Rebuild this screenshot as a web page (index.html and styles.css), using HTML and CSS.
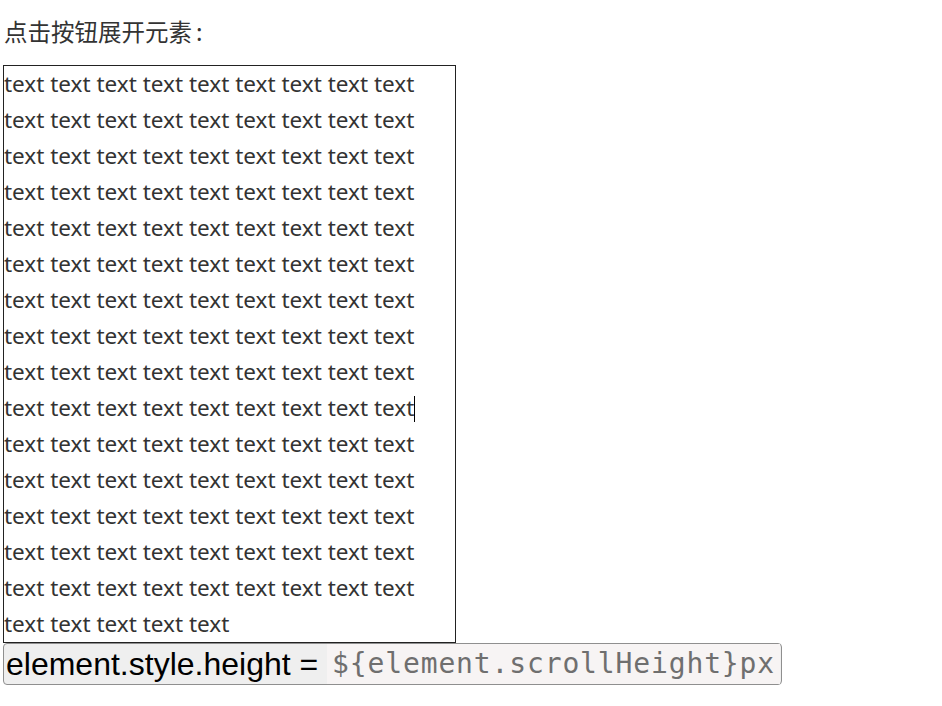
FILE: index.html
```html
<!DOCTYPE html>
<html lang="zh-CN">
<head>
<meta charset="utf-8">
<title>展开元素</title>
<link rel="stylesheet" href="styles.css">
</head>
<body>
<div class="page">
  <p class="title">点击按钮展开元素<span class="colon">:</span></p>
  <div class="panel" id="panel">
    text text text text text text text text text
    text text text text text text text text text
    text text text text text text text text text
    text text text text text text text text text
    text text text text text text text text text
    text text text text text text text text text
    text text text text text text text text text
    text text text text text text text text text
    text text text text text text text text text
    text text text text text text text text text<span class="caret"></span>
    text text text text text text text text text
    text text text text text text text text text
    text text text text text text text text text
    text text text text text text text text text
    text text text text text text text text text
    text text text text text
  </div>
  <button class="expand-btn" type="button">element.style.height = <code class="snippet">${element.scrollHeight}px</code></button>
</div>
</body>
</html>
```

FILE: styles.css
```css
html, body {
  margin: 0;
  background: #fff;
}

.page {
  padding: 13px 0 0 3px;
}

.title {
  margin: 0 0 16px 1px;
  font-family: "Noto Sans CJK SC", "Noto Sans", sans-serif;
  font-size: 23.5px;
  line-height: 36px;
  color: #333;
}

.title .colon {
  margin-left: 4px;
}

.panel {
  width: 451px;
  border: 1px solid #222;
  font-family: "Noto Sans", "Open Sans", sans-serif;
  font-size: 22.5px;
  line-height: 36px;
  color: #333;
}

/* text cursor sitting at the end of a line */
.caret {
  display: inline-block;
  width: 1px;
  height: 26px;
  margin-right: -1px;
  background: #000;
  vertical-align: -6px;
}

.expand-btn {
  display: flex;
  align-items: center;
  height: 42px;
  margin: 0;
  padding: 0 1px 0 2px;
  border: 1px solid #8f8f8f;
  border-radius: 4px;
  background: #efefef;
  font-family: "Liberation Sans", Arial, sans-serif;
  font-size: 32px;
  color: #000;
  white-space: pre;
}

.snippet {
  display: inline-block;
  height: 40px;
  padding: 0 5px 0 5px;
  background: #f7f4f4;
  color: #6f6f6f;
  font-family: "DejaVu Sans Mono", monospace;
  font-size: 28px;
  letter-spacing: 0.86px;
  line-height: 40px;
}
```
